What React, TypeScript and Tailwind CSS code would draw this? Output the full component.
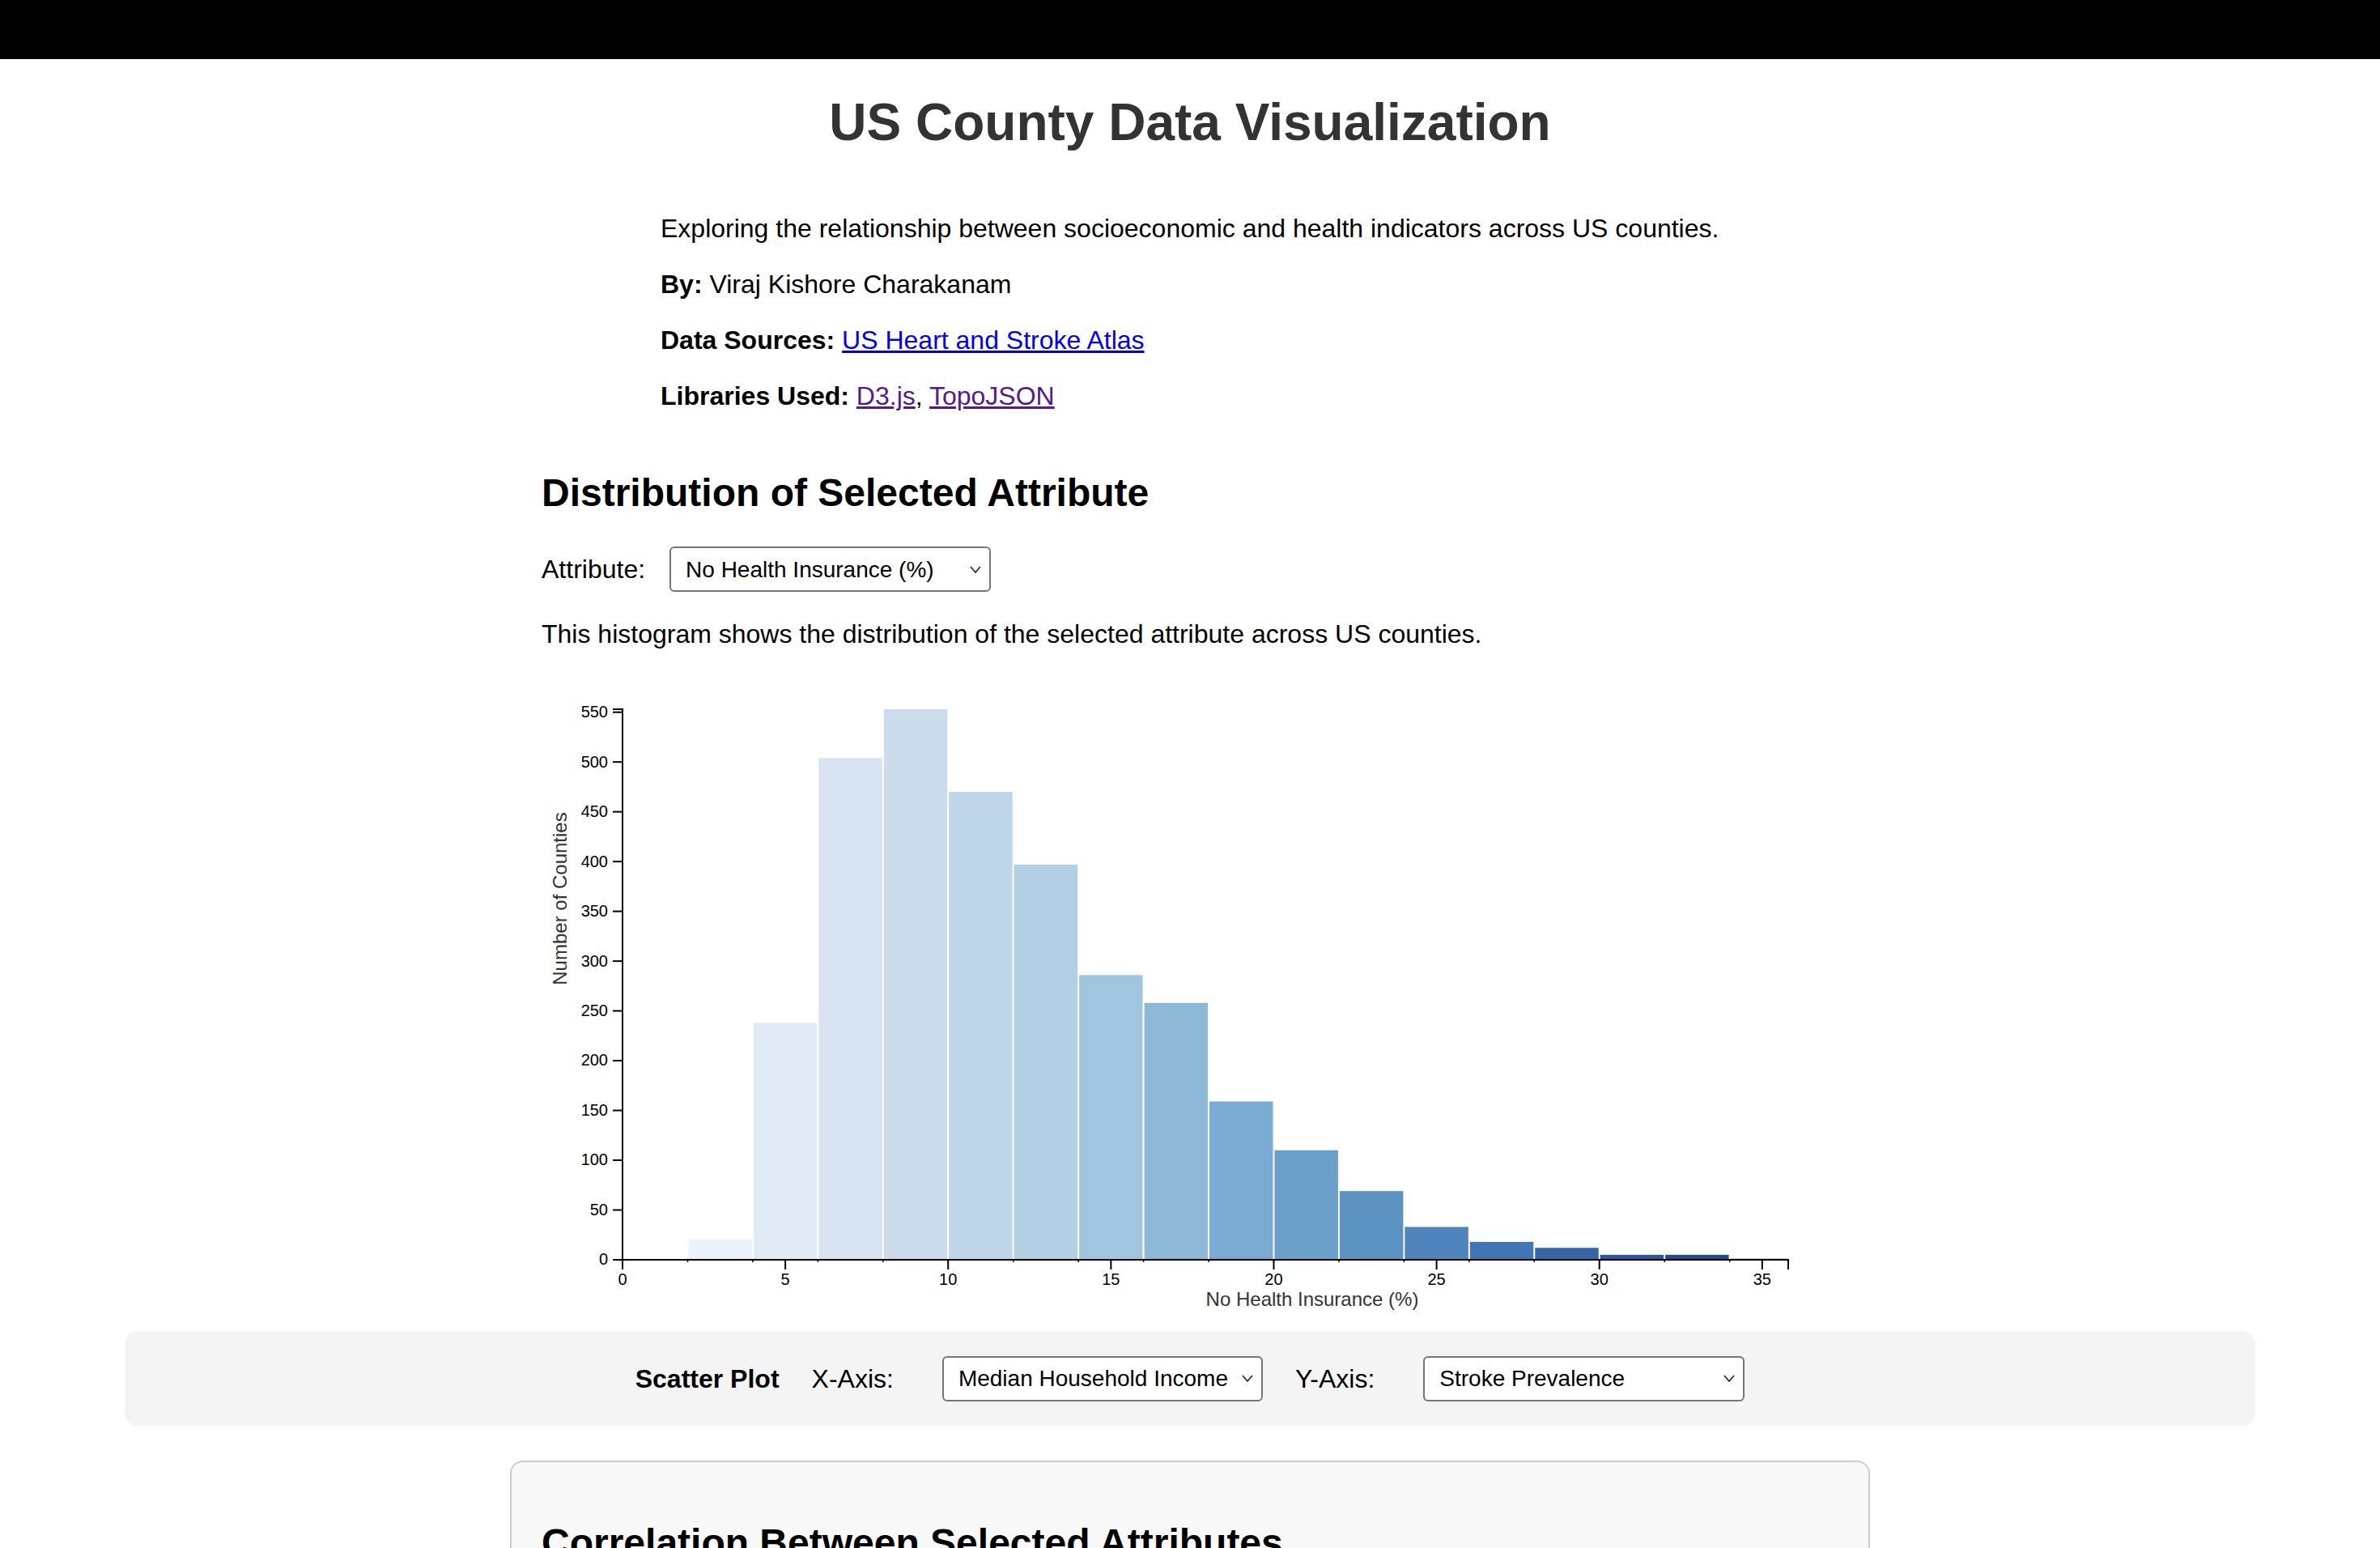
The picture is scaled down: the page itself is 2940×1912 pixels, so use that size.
import React from 'react'

const FONT = "font-['Liberation_Sans',Arial,Helvetica,sans-serif]"

// histogram bins: [x0, x1, count, fill]
const bins: [number, number, number, string][] = [
  [2, 4, 21, '#ebf3fa'],
  [4, 6, 238, '#e1ebf6'],
  [6, 8, 504, '#d8e4f2'],
  [8, 10, 553, '#ccdcec'],
  [10, 12, 470, '#bfd6ea'],
  [12, 14, 397, '#b2cfe4'],
  [14, 16, 286, '#a2c5df'],
  [16, 18, 258, '#8db8d8'],
  [18, 20, 159, '#7aabd2'],
  [20, 22, 110, '#6aa0ca'],
  [22, 24, 69, '#5c93c3'],
  [24, 26, 33, '#4f84bc'],
  [26, 28, 18, '#4275b3'],
  [28, 30, 12, '#3566a8'],
  [30, 32, 5, '#2a579a'],
  [32, 34, 5, '#234b8b'],
  [34, 35.8, 1, '#1d4483'],
]

const ML = 100
const MT = 40
const W = 1440
const H = 680
const XMAX = 35.8
const YMAX = 553

const sx = (v: number) => ML + (v * W) / XMAX
const sy = (c: number) => MT + H - (c * H) / YMAX

function Chevron() {
  return (
    <svg width="14" height="9" viewBox="0 0 14 9" className="shrink-0">
      <polyline points="1,1 7,8 13,1" fill="none" stroke="#222" strokeWidth="1.6" />
    </svg>
  )
}

function FakeSelect({ value, width }: { value: string; width: string }) {
  return (
    <div
      className={`${width} h-[56px] flex items-center justify-between bg-white border-2 border-[#767676] rounded-[6px] pl-[18px] pr-[10px] text-[28px] text-black`}
    >
      <span>{value}</span>
      <Chevron />
    </div>
  )
}

function Histogram() {
  const yTicks = Array.from({ length: 12 }, (_, i) => i * 50)
  const xTicks = [0, 5, 10, 15, 20, 25, 30, 35]
  return (
    <svg width="1600" height="800" className="block mt-[34px]" fontFamily="'Liberation Sans', Arial, sans-serif">
      {bins.map(([x0, x1, c, fill]) => (
        <rect
          key={x0}
          x={sx(x0) + 1}
          y={sy(c)}
          width={sx(x1) - sx(x0) - 2}
          height={sy(0) - sy(c)}
          fill={fill}
        />
      ))}

      {/* y axis */}
      <g fill="none" stroke="#000" strokeWidth="2">
        <path d={`M${ML - 12},${sy(YMAX)}H${ML}V${sy(0)}H${ML - 12}`} />
        {yTicks.map((t) => (
          <line key={t} x1={ML - 12} x2={ML} y1={sy(t)} y2={sy(t)} />
        ))}
      </g>
      {yTicks.map((t) => (
        <text key={t} x={ML - 18} y={sy(t)} dy="0.32em" textAnchor="end" fontSize="20" fill="#000">
          {t}
        </text>
      ))}

      {/* x axis */}
      <g fill="none" stroke="#000" strokeWidth="2">
        <path d={`M${ML},${sy(0) + 12}V${sy(0)}H${ML + W}V${sy(0) + 12}`} />
        {xTicks.map((t) => (
          <line key={t} x1={sx(t)} x2={sx(t)} y1={sy(0)} y2={sy(0) + 12} />
        ))}
        {bins.map(([x0]) => (
          <line key={x0} x1={sx(x0)} x2={sx(x0)} y1={sy(0)} y2={sy(0) + 3} strokeWidth="1.5" />
        ))}
      </g>
      {xTicks.map((t) => (
        <text key={t} x={sx(t)} y={sy(0) + 17} dy="0.71em" textAnchor="middle" fontSize="20" fill="#000">
          {t}
        </text>
      ))}

      <text x="952" y="777" textAnchor="middle" fontSize="24" fill="#333">
        No Health Insurance (%)
      </text>
      <text transform="rotate(-90)" x="-274" y="31" textAnchor="middle" fontSize="24" fill="#333">
        Number of Counties
      </text>
    </svg>
  )
}

export default function App() {
  return (
    <div className={`min-h-screen bg-white text-black text-[32px] ${FONT}`}>
      <div className="h-[73px] bg-black" />

      <h1 className="mt-[41px] text-center text-[64px] leading-[74px] font-bold text-[#333]">
        US County Data Visualization
      </h1>

      <div className="w-[1308px] mx-auto mt-[76px] flex flex-col gap-[32px] leading-[37px]">
        <p>Exploring the relationship between socioeconomic and health indicators across US counties.</p>
        <p>
          <b>By:</b> Viraj Kishore Charakanam
        </p>
        <p>
          <b>Data Sources:</b>{' '}
          <a href="#" className="text-[#0000ee] underline">
            US Heart and Stroke Atlas
          </a>
        </p>
        <p>
          <b>Libraries Used:</b>{' '}
          <a href="#" className="text-[#551a8b] underline">
            D3.js
          </a>
          ,{' '}
          <a href="#" className="text-[#551a8b] underline">
            TopoJSON
          </a>
        </p>
      </div>

      <section className="w-[1680px] mx-auto px-[39px] mt-[73px]">
        <h2 className="text-[48px] leading-[55px] font-bold">Distribution of Selected Attribute</h2>
        <div className="mt-[39px] flex items-center gap-[30px] leading-[37px]">
          <span>Attribute:</span>
          <FakeSelect value="No Health Insurance (%)" width="w-[397px]" />
        </div>
        <p className="mt-[34px] leading-[37px]">
          This histogram shows the distribution of the selected attribute across US counties.
        </p>
        <Histogram />
      </section>

      <div className="w-[2632px] mx-auto mt-[8px] h-[117px] bg-[#f4f4f4] rounded-[16px] flex items-center justify-center">
        <span className="text-[32px] font-bold">Scatter Plot</span>
        <span className="ml-[40px]">X-Axis:</span>
        <div className="ml-[60px]">
          <FakeSelect value="Median Household Income" width="w-[396px]" />
        </div>
        <span className="ml-[40px]">Y-Axis:</span>
        <div className="ml-[60px]">
          <FakeSelect value="Stroke Prevalence" width="w-[397px]" />
        </div>
      </div>

      <div className="w-[1680px] mx-auto mt-[43px] mb-[80px] border-2 border-[#cccccc] rounded-[16px] bg-[#f8f8f8] px-[37px] pt-[40px] pb-[60px]">
        <h2 className="mt-[32px] text-[48px] leading-[55px] font-bold">Correlation Between Selected Attributes</h2>
        <p className="mt-[32px] leading-[37px]">
          This scatter plot shows how the two selected attributes relate across US counties.
        </p>
        <div className="mt-[32px] h-[800px]" />
      </div>
    </div>
  )
}
